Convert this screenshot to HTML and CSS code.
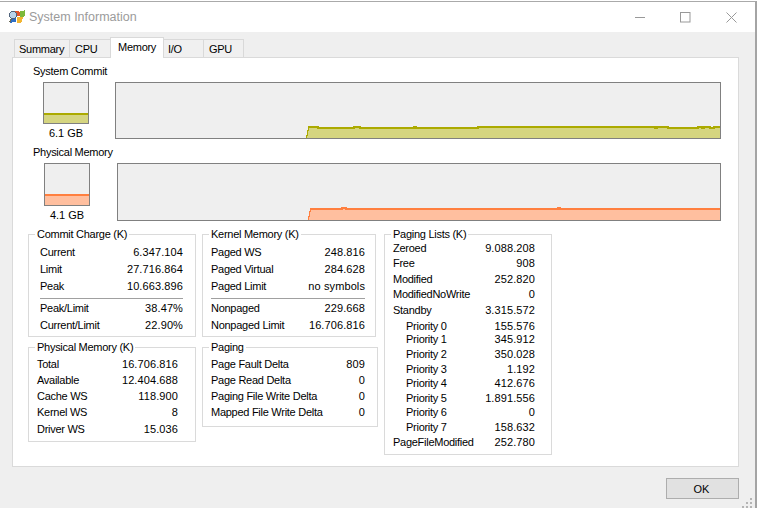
FILE: index.html
```html
<!DOCTYPE html>
<html lang="en">
<head>
<meta charset="utf-8">
<title>System Information</title>
<link rel="stylesheet" href="styles.css">
</head>
<body>
<div class="window">
  <header class="titlebar">
    <svg class="app-icon" width="18" height="16" viewBox="0 0 18 16" shape-rendering="crispEdges">
      <path fill="#e2562c" d="M6 2h5v1h1v4H8V6H6z"/>
      <path fill="#7cb93a" d="M12 2h3l2-1v6l-3 1h-2z"/>
      <path fill="#2f6fc4" d="M3 8h5v5H5l-3 1z"/>
      <path fill="#f2b531" d="M9 8h4l2 0-1 5-2 1H9z"/>
      <circle cx="5" cy="6" r="3.5" fill="#b9d3ea" stroke="#51647c" stroke-width="1"/>
      <path fill="#6a6a58" d="M2 10h2v1H3v2H1v-1h1z"/>
    </svg>
    <span class="title-text">System Information</span>
    <div class="caption-btns">
      <svg width="10" height="11" viewBox="0 0 10 11"><path d="M0 5.500h10" stroke="#999" fill="none"/></svg>
      <svg width="11" height="11" viewBox="0 0 11 11"><rect x=".5" y=".5" width="9.500" height="9.500" stroke="#999" fill="none"/></svg>
      <svg width="11" height="11" viewBox="0 0 11 11"><path d="M.5.5l10 10M10.500.5l-10 10" stroke="#999" fill="none"/></svg>
    </div>
  </header>

  <main class="content">
    <nav class="tabs">
      <span class="tab tab-summary">Summary</span>
      <span class="tab tab-cpu">CPU</span>
      <span class="tab tab-memory active">Memory</span>
      <span class="tab tab-io">I/O</span>
      <span class="tab tab-gpu">GPU</span>
    </nav>

    <section class="panel">
      <div class="meter">
        <div class="meter-label">System Commit</div>
        <div class="meter-row">
          <div class="gauge-col commit-col">
            <div class="gauge commit-gauge"><div class="gauge-fill commit-fill"></div></div>
            <div class="gauge-value">6.1 GB</div>
          </div>
          <svg class="graph commit-graph" width="606" height="57" viewBox="-1 -1 606 57" shape-rendering="crispEdges">
            <path fill="#d5d580" d="M191 55L192 44H604V55z"/>
            <path fill="none" stroke="#acaa00" d="M190 55V52H191V47H192V44"/>
            <path fill="none" stroke="#acaa00" stroke-width="2" d="M192 44H202V45H238V44H244V45H298V44H300V45H362V44H539V45H541V44H552V45H582V44H586V45H588V44H594V45H598V44H604"/>
          </svg>
        </div>
      </div>

      <div class="meter">
        <div class="meter-label">Physical Memory</div>
        <div class="meter-row">
          <div class="gauge-col phys-col">
            <div class="gauge phys-gauge"><div class="gauge-fill phys-fill"></div></div>
            <div class="gauge-value">4.1 GB</div>
          </div>
          <svg class="graph phys-graph" width="604" height="58" viewBox="-1 -1 604 58" shape-rendering="crispEdges">
            <path fill="#ffbf9f" d="M191 56L192 45H602V56z"/>
            <path fill="none" stroke="#ff7f3f" d="M190 56V52H191V47H192V45"/>
            <path fill="none" stroke="#ff7f3f" stroke-width="2" d="M192 45H224V44H228V45H440V44H442V45H602"/>
          </svg>
        </div>
      </div>

      <div class="groups">
        <div class="group-col col-a">
          <fieldset class="group commit">
            <legend>Commit Charge (K)</legend>
            <div class="row tall"><span>Current</span><span>6.347.104</span></div>
            <div class="row tall"><span>Limit</span><span>27.716.864</span></div>
            <div class="row tall"><span>Peak</span><span>10.663.896</span></div>
            <hr class="sep">
            <div class="row tall"><span>Peak/Limit</span><span>38.47%</span></div>
            <div class="row tall"><span>Current/Limit</span><span>22.90%</span></div>
          </fieldset>
          <fieldset class="group phys">
            <legend>Physical Memory (K)</legend>
            <div class="row"><span>Total</span><span>16.706.816</span></div>
            <div class="row"><span>Available</span><span>12.404.688</span></div>
            <div class="row"><span>Cache WS</span><span>118.900</span></div>
            <div class="row tall"><span>Kernel WS</span><span>8</span></div>
            <div class="row"><span>Driver WS</span><span>15.036</span></div>
          </fieldset>
        </div>

        <div class="group-col col-b">
          <fieldset class="group kernel">
            <legend>Kernel Memory (K)</legend>
            <div class="row tall"><span>Paged WS</span><span>248.816</span></div>
            <div class="row tall"><span>Paged Virtual</span><span>284.628</span></div>
            <div class="row tall"><span>Paged Limit</span><span>no symbols</span></div>
            <hr class="sep">
            <div class="row tall"><span>Nonpaged</span><span>229.668</span></div>
            <div class="row tall"><span>Nonpaged Limit</span><span>16.706.816</span></div>
          </fieldset>
          <fieldset class="group paging">
            <legend>Paging</legend>
            <div class="row"><span>Page Fault Delta</span><span>809</span></div>
            <div class="row"><span>Page Read Delta</span><span>0</span></div>
            <div class="row"><span>Paging File Write Delta</span><span>0</span></div>
            <div class="row"><span>Mapped File Write Delta</span><span>0</span></div>
          </fieldset>
        </div>

        <div class="group-col col-c">
          <fieldset class="group lists">
            <legend>Paging Lists (K)</legend>
            <div class="row h15"><span>Zeroed</span><span>9.088.208</span></div>
            <div class="row h16"><span>Free</span><span>908</span></div>
            <div class="row h15"><span>Modified</span><span>252.820</span></div>
            <div class="row h16"><span>ModifiedNoWrite</span><span>0</span></div>
            <div class="row h16"><span>Standby</span><span>3.315.572</span></div>
            <div class="row h13 sub"><span>Priority 0</span><span>155.576</span></div>
            <div class="row h15 sub"><span>Priority 1</span><span>345.912</span></div>
            <div class="row h15 sub"><span>Priority 2</span><span>350.028</span></div>
            <div class="row h14 sub"><span>Priority 3</span><span>1.192</span></div>
            <div class="row h15 sub"><span>Priority 4</span><span>412.676</span></div>
            <div class="row h14 sub"><span>Priority 5</span><span>1.891.556</span></div>
            <div class="row h15 sub"><span>Priority 6</span><span>0</span></div>
            <div class="row h15 sub"><span>Priority 7</span><span>158.632</span></div>
            <div class="row h15"><span>PageFileModified</span><span>252.780</span></div>
          </fieldset>
        </div>
      </div>
    </section>

    <footer class="footer">
      <button class="ok" type="button">OK</button>
    </footer>

    <svg class="grip" width="12" height="10" viewBox="0 0 12 10" shape-rendering="crispEdges">
      <path fill="#b4b4b4" d="M8 0h2v2H8zM4 4h2v2H4zM8 4h2v2H8zM0 8h2v2H0zM4 8h2v2H4zM8 8h2v2H8z"/>
    </svg>
  </main>
</div>
</body>
</html>
```

FILE: styles.css
```css
* { box-sizing: border-box; }
html, body { margin: 0; padding: 0; }
body {
  width: 760px;
  height: 508px;
  padding-top: 1px;
  background: #fff;
  color: #000;
  font-family: "Liberation Sans", Arial, sans-serif;
  font-size: 11px;
  line-height: 14px;
  letter-spacing: -0.27px;
  overflow: hidden;
}
.window {
  width: 757px;
  height: 507px;
  border-top: 1px solid #aaa;
  border-right: 2px solid #a4a4a4;
  display: flex;
  flex-direction: column;
  background: #efefef;
}
.titlebar {
  height: 30px;
  flex: none;
  background: #fff;
  display: flex;
  align-items: center;
  padding-left: 8px;
}
.app-icon { margin-right: 3px; }
.title-text { color: #9b9b9b; font-size: 12.500px; letter-spacing: 0; }
.caption-btns {
  margin-left: auto;
  display: flex;
  align-items: center;
  gap: 35px;
  margin-right: 18px;
}
.content { flex: 1; position: relative; display: flex; flex-direction: column; }
.tabs {
  height: 25px;
  flex: none;
  display: flex;
  align-items: flex-end;
  padding-left: 14px;
  position: relative;
  z-index: 1;
}
.tab {
  height: 18px;
  border: 1px solid #d9d9d9;
  border-bottom: 0;
  margin-left: -1px;
  background: #f0f0f0;
  padding-left: 5px;
  line-height: 18px;
}
.tab-summary { width: 56px; margin-left: 0; padding-left: 4px; }
.tab-cpu { width: 42px; }
.tab-memory { width: 54px; }
.tab-io { width: 41px; padding-left: 4px; }
.tab-gpu { width: 41px; }
.tab.active {
  height: 21px;
  margin-bottom: -1px;
  background: #fff;
  padding-left: 7px;
  line-height: 19px;
}
.panel {
  margin-left: 12px;
  width: 727px;
  height: 410px;
  flex: none;
  background: #fff;
  border: 1px solid #dadada;
  padding-top: 6px;
}
.meter { height: 81px; }
.meter + .meter { height: 82px; }
.meter-label { margin-left: 20px; height: 18px; }
.meter-row { display: flex; align-items: flex-start; }
.gauge-col {
  width: 46px;
  display: flex;
  flex-direction: column;
  align-items: center;
}
.commit-col { margin-left: 30px; margin-right: 26px; }
.phys-col { margin-left: 31px; margin-right: 27px; }
.gauge {
  width: 46px;
  background: #efefef;
  border: 1px solid #808080;
  display: flex;
  flex-direction: column;
  justify-content: flex-end;
}
.commit-gauge { height: 42px; }
.phys-gauge { height: 43px; }
.gauge-fill { border-top: 2px solid; }
.commit-fill { height: 10px; background: #d5d580; border-color: #acaa00; }
.phys-fill { height: 11px; background: #ffbf9f; border-color: #ff7f3f; }
.gauge-value { margin-top: 2px; height: 14px; white-space: nowrap; letter-spacing: 0; }
.graph {
  display: block;
  flex: none;
  background: #efefef;
  outline: 1px solid #808080;
  outline-offset: -1px;
}
.groups {
  display: flex;
  gap: 6px;
  margin-left: 15px;
}
.group-col { display: flex; flex-direction: column; }
.col-a { width: 168px; }
.col-b { width: 176px; }
.col-c { width: 168px; }
.group {
  margin: 0;
  min-width: 0;
  border: 1px solid #dadada;
  padding: 0;
}
.group legend {
  padding: 0 2px;
  margin-left: 6px;
  height: 14px;
}
.commit { height: 110px; padding-top: 4px; }
.phys { height: 102px; margin-top: 3px; padding-top: 3px; }
.kernel { width: 174px; height: 110px; padding-top: 4px; }
.paging { height: 87px; margin-top: 3px; padding-top: 3px; }
.lists { height: 228px; }
.commit .row, .commit .sep { margin-left: 11px; margin-right: 12px; }
.phys .row { margin-left: 8px; margin-right: 17px; }
.kernel .row, .kernel .sep { margin-left: 8px; margin-right: 10px; }
.paging .row { margin-left: 8px; margin-right: 12px; }
.lists .row { margin-left: 8px; margin-right: 16px; }
.row {
  display: flex;
  justify-content: space-between;
  height: 16px;
  white-space: nowrap;
}
.row span:last-child { letter-spacing: 0.1px; }
.row.tall { height: 17px; }
.row.h13 { height: 13px; }
.row.h14 { height: 14px; }
.row.h15 { height: 15px; }
.row.h16 { height: 16px; }
.sub { padding-left: 13px; }
.sep {
  height: 1px;
  border: 0;
  background: #a0a0a0;
  margin-top: 2px;
  margin-bottom: 2px;
}
.footer {
  display: flex;
  justify-content: flex-end;
  padding-top: 11px;
  padding-right: 16px;
}
.ok {
  width: 73px;
  height: 21px;
  padding: 0 2px 0 0;
  border: 1px solid #adadad;
  background: #e1e1e1;
  font: inherit;
  letter-spacing: 0;
  color: #000;
}
.grip { position: absolute; right: 1px; bottom: 0; }
```
